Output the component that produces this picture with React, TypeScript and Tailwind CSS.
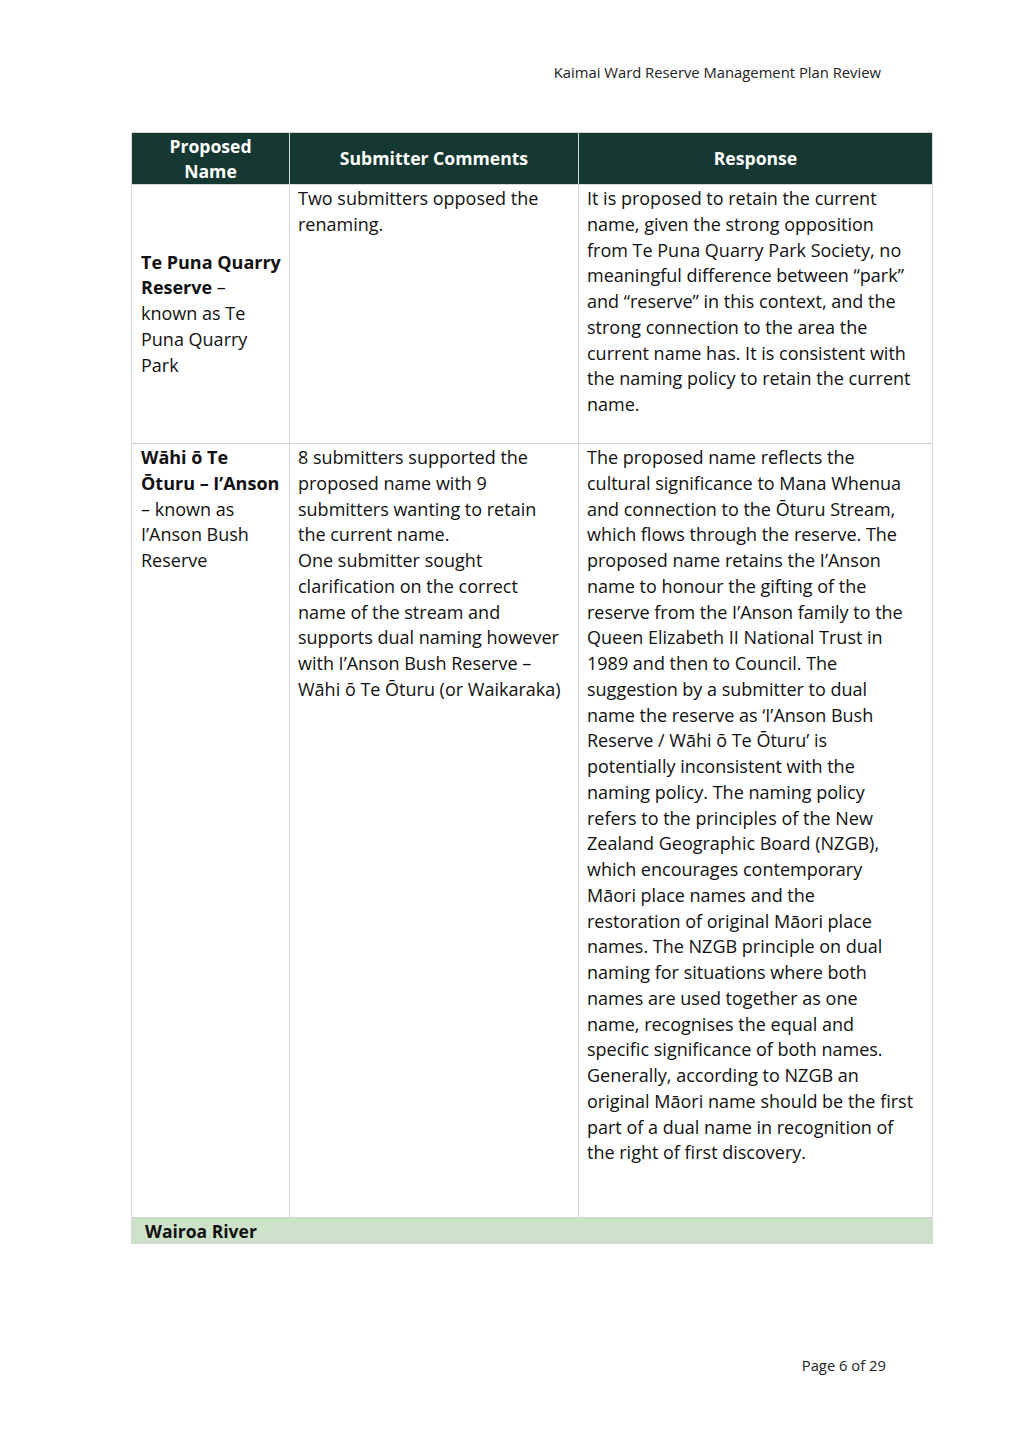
import React from "react";

const L = ({ lines }: { lines: React.ReactNode[] }) => (
  <>
    {lines.map((l, i) => (
      <div key={i} className="whitespace-nowrap">
        {l}
      </div>
    ))}
  </>
);

export default function App() {
  const r1c3 = [
    "It is proposed to retain the current",
    "name, given the strong opposition",
    "from Te Puna Quarry Park Society, no",
    "meaningful difference between \u201cpark\u201d",
    "and \u201creserve\u201d in this context, and the",
    "strong connection to the area the",
    "current name has. It is consistent with",
    "the naming policy to retain the current",
    "name.",
  ];
  const r2c2 = [
    "8 submitters supported the",
    "proposed name with 9",
    "submitters wanting to retain",
    "the current name.",
    "One submitter sought",
    "clarification on the correct",
    "name of the stream and",
    "supports dual naming however",
    "with I\u2019Anson Bush Reserve \u2013",
    "W\u0101hi \u014d Te \u014cturu (or Waikaraka)",
  ];
  const r2c3 = [
    "The proposed name reflects the",
    "cultural significance to Mana Whenua",
    "and connection to the \u014cturu Stream,",
    "which flows through the reserve. The",
    "proposed name retains the I\u2019Anson",
    "name to honour the gifting of the",
    "reserve from the I\u2019Anson family to the",
    "Queen Elizabeth II National Trust in",
    "1989 and then to Council. The",
    "suggestion by a submitter to dual",
    "name the reserve as \u2018I\u2019Anson Bush",
    "Reserve / W\u0101hi \u014d Te \u014cturu\u2019 is",
    "potentially inconsistent with the",
    "naming policy. The naming policy",
    "refers to the principles of the New",
    "Zealand Geographic Board (NZGB),",
    "which encourages contemporary",
    "M\u0101ori place names and the",
    "restoration of original M\u0101ori place",
    "names. The NZGB principle on dual",
    "naming for situations where both",
    "names are used together as one",
    "name, recognises the equal and",
    "specific significance of both names.",
    "Generally, according to NZGB an",
    "original M\u0101ori name should be the first",
    "part of a dual name in recognition of",
    "the right of first discovery.",
  ];

  return (
    <div className="w-[1023px] h-[1447px] bg-white text-[#111] font-['Open_Sans',sans-serif] flex flex-col">
      <div className="pt-[62px] pr-[142px] text-right text-[14.8px] leading-[20px] text-[#222]">
        Kaimai Ward Reserve Management Plan Review
      </div>

      <div className="mt-[50px] ml-[131px] w-[802px] border border-[#d6d6d6] text-[18px] leading-[25.75px]">
        {/* header */}
        <div className="grid grid-cols-[158px_289px_1fr] h-[51px] bg-[#163832] text-white font-bold text-[17.6px] leading-[25px]">
          <div className="flex items-center justify-center text-center border-r border-[#d6d6d6]">
            Proposed
            <br />
            Name
          </div>
          <div className="flex items-center justify-center border-r border-[#d6d6d6]">
            Submitter Comments
          </div>
          <div className="flex items-center justify-center">Response</div>
        </div>

        {/* row 1 */}
        <div className="grid grid-cols-[158px_289px_1fr] h-[259px] border-t border-[#d6d6d6]">
          <div className="flex flex-col justify-center pl-[9px] border-r border-[#d6d6d6]">
            <L
              lines={[
                <b>Te Puna Quarry</b>,
                <>
                  <b>Reserve</b> {"\u2013"}
                </>,
                "known as Te",
                "Puna Quarry",
                "Park",
              ]}
            />
          </div>
          <div className="pl-[8px] pt-[1px] border-r border-[#d6d6d6]">
            <L lines={["Two submitters opposed the", "renaming."]} />
          </div>
          <div className="pl-[8px] pt-[1px]">
            <L lines={r1c3} />
          </div>
        </div>

        {/* row 2 */}
        <div className="grid grid-cols-[158px_289px_1fr] h-[774px] border-t border-[#d6d6d6]">
          <div className="pl-[9px] pt-[1px] border-r border-[#d6d6d6]">
            <L
              lines={[
                <b>{"W\u0101hi \u014d Te"}</b>,
                <b>{"\u014cturu \u2013 I\u2019Anson"}</b>,
                "\u2013 known as",
                "I\u2019Anson Bush",
                "Reserve",
              ]}
            />
          </div>
          <div className="pl-[8px] pt-[1px] border-r border-[#d6d6d6]">
            <L lines={r2c2} />
          </div>
          <div className="pl-[8px] pt-[1px]">
            <L lines={r2c3} />
          </div>
        </div>

        {/* group row */}
        <div className="h-[26px] border-t border-[#d6d6d6] bg-[#cce3c9] pl-[13px] font-bold text-[17.5px] leading-[26px]">
          Wairoa River
        </div>
      </div>

      <div className="mt-[111px] pr-[137px] text-right text-[14.8px] leading-[20px] text-[#222]">
        Page 6 of 29
      </div>
    </div>
  );
}
